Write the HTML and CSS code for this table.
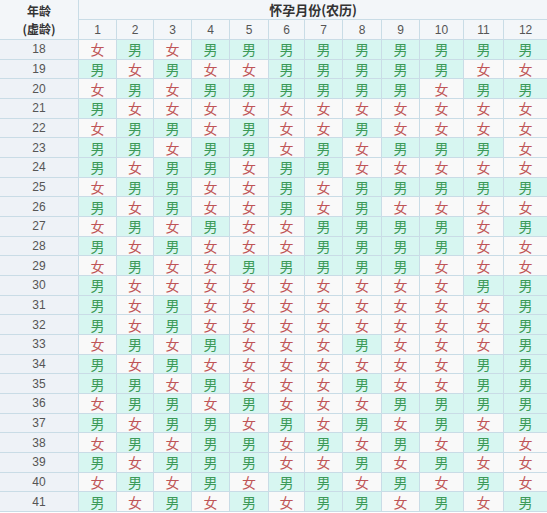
FILE: index.html
```html
<!DOCTYPE html>
<html lang="zh-CN">
<head>
<meta charset="utf-8">
<title>生男生女清宫表</title>
<link rel="stylesheet" href="styles.css">
</head>
<body>
<table class="chart">
<colgroup>
<col class="c-age"><col class="c38"><col class="c37"><col class="c38"><col class="c38"><col class="c39"><col class="c36"><col class="c38"><col class="c39"><col class="c38"><col class="c44"><col class="c40"><col class="c44">
</colgroup>
<thead>
<tr class="h1"><th class="age-h" rowspan="2">年龄<br>(虚龄)</th><th class="title" colspan="12">怀孕月份(农历)</th></tr>
<tr class="h2"><th>1</th><th>2</th><th>3</th><th>4</th><th>5</th><th>6</th><th>7</th><th>8</th><th>9</th><th>10</th><th>11</th><th>12</th></tr>
</thead>
<tbody>
<tr><td class="age">18</td><td class="f">女</td><td class="m">男</td><td class="f">女</td><td class="m">男</td><td class="m">男</td><td class="m">男</td><td class="m">男</td><td class="m">男</td><td class="m">男</td><td class="m">男</td><td class="m">男</td><td class="m">男</td></tr>
<tr><td class="age">19</td><td class="m">男</td><td class="f">女</td><td class="m">男</td><td class="f">女</td><td class="f">女</td><td class="m">男</td><td class="m">男</td><td class="m">男</td><td class="m">男</td><td class="m">男</td><td class="f">女</td><td class="f">女</td></tr>
<tr><td class="age">20</td><td class="f">女</td><td class="m">男</td><td class="f">女</td><td class="m">男</td><td class="m">男</td><td class="m">男</td><td class="m">男</td><td class="m">男</td><td class="m">男</td><td class="f">女</td><td class="m">男</td><td class="m">男</td></tr>
<tr><td class="age">21</td><td class="m">男</td><td class="f">女</td><td class="f">女</td><td class="f">女</td><td class="f">女</td><td class="f">女</td><td class="f">女</td><td class="f">女</td><td class="f">女</td><td class="f">女</td><td class="f">女</td><td class="f">女</td></tr>
<tr><td class="age">22</td><td class="f">女</td><td class="m">男</td><td class="m">男</td><td class="f">女</td><td class="m">男</td><td class="f">女</td><td class="f">女</td><td class="m">男</td><td class="f">女</td><td class="f">女</td><td class="f">女</td><td class="f">女</td></tr>
<tr><td class="age">23</td><td class="m">男</td><td class="m">男</td><td class="f">女</td><td class="m">男</td><td class="m">男</td><td class="f">女</td><td class="m">男</td><td class="f">女</td><td class="m">男</td><td class="m">男</td><td class="m">男</td><td class="f">女</td></tr>
<tr><td class="age">24</td><td class="m">男</td><td class="f">女</td><td class="m">男</td><td class="m">男</td><td class="f">女</td><td class="m">男</td><td class="m">男</td><td class="f">女</td><td class="f">女</td><td class="f">女</td><td class="f">女</td><td class="f">女</td></tr>
<tr><td class="age">25</td><td class="f">女</td><td class="m">男</td><td class="m">男</td><td class="f">女</td><td class="f">女</td><td class="m">男</td><td class="f">女</td><td class="m">男</td><td class="m">男</td><td class="m">男</td><td class="m">男</td><td class="m">男</td></tr>
<tr><td class="age">26</td><td class="m">男</td><td class="f">女</td><td class="m">男</td><td class="f">女</td><td class="f">女</td><td class="m">男</td><td class="f">女</td><td class="m">男</td><td class="f">女</td><td class="f">女</td><td class="f">女</td><td class="f">女</td></tr>
<tr><td class="age">27</td><td class="f">女</td><td class="m">男</td><td class="f">女</td><td class="m">男</td><td class="f">女</td><td class="f">女</td><td class="m">男</td><td class="m">男</td><td class="m">男</td><td class="m">男</td><td class="f">女</td><td class="m">男</td></tr>
<tr><td class="age">28</td><td class="m">男</td><td class="f">女</td><td class="m">男</td><td class="f">女</td><td class="f">女</td><td class="f">女</td><td class="m">男</td><td class="m">男</td><td class="m">男</td><td class="m">男</td><td class="f">女</td><td class="f">女</td></tr>
<tr><td class="age">29</td><td class="f">女</td><td class="m">男</td><td class="f">女</td><td class="f">女</td><td class="m">男</td><td class="m">男</td><td class="m">男</td><td class="m">男</td><td class="m">男</td><td class="f">女</td><td class="f">女</td><td class="f">女</td></tr>
<tr><td class="age">30</td><td class="m">男</td><td class="f">女</td><td class="f">女</td><td class="f">女</td><td class="f">女</td><td class="f">女</td><td class="f">女</td><td class="f">女</td><td class="f">女</td><td class="f">女</td><td class="m">男</td><td class="m">男</td></tr>
<tr><td class="age">31</td><td class="m">男</td><td class="f">女</td><td class="m">男</td><td class="f">女</td><td class="f">女</td><td class="f">女</td><td class="f">女</td><td class="f">女</td><td class="f">女</td><td class="f">女</td><td class="f">女</td><td class="m">男</td></tr>
<tr><td class="age">32</td><td class="m">男</td><td class="f">女</td><td class="m">男</td><td class="f">女</td><td class="f">女</td><td class="f">女</td><td class="f">女</td><td class="f">女</td><td class="f">女</td><td class="f">女</td><td class="f">女</td><td class="m">男</td></tr>
<tr><td class="age">33</td><td class="f">女</td><td class="m">男</td><td class="f">女</td><td class="m">男</td><td class="f">女</td><td class="f">女</td><td class="f">女</td><td class="m">男</td><td class="f">女</td><td class="f">女</td><td class="f">女</td><td class="m">男</td></tr>
<tr><td class="age">34</td><td class="m">男</td><td class="f">女</td><td class="m">男</td><td class="f">女</td><td class="f">女</td><td class="f">女</td><td class="f">女</td><td class="f">女</td><td class="f">女</td><td class="f">女</td><td class="m">男</td><td class="m">男</td></tr>
<tr><td class="age">35</td><td class="m">男</td><td class="m">男</td><td class="f">女</td><td class="m">男</td><td class="f">女</td><td class="f">女</td><td class="f">女</td><td class="m">男</td><td class="f">女</td><td class="f">女</td><td class="m">男</td><td class="m">男</td></tr>
<tr><td class="age">36</td><td class="f">女</td><td class="m">男</td><td class="m">男</td><td class="f">女</td><td class="m">男</td><td class="f">女</td><td class="f">女</td><td class="f">女</td><td class="m">男</td><td class="m">男</td><td class="m">男</td><td class="m">男</td></tr>
<tr><td class="age">37</td><td class="m">男</td><td class="f">女</td><td class="m">男</td><td class="m">男</td><td class="f">女</td><td class="m">男</td><td class="f">女</td><td class="m">男</td><td class="f">女</td><td class="m">男</td><td class="f">女</td><td class="m">男</td></tr>
<tr><td class="age">38</td><td class="f">女</td><td class="m">男</td><td class="f">女</td><td class="m">男</td><td class="m">男</td><td class="f">女</td><td class="m">男</td><td class="f">女</td><td class="m">男</td><td class="f">女</td><td class="m">男</td><td class="f">女</td></tr>
<tr><td class="age">39</td><td class="m">男</td><td class="f">女</td><td class="m">男</td><td class="m">男</td><td class="m">男</td><td class="f">女</td><td class="f">女</td><td class="m">男</td><td class="f">女</td><td class="m">男</td><td class="f">女</td><td class="f">女</td></tr>
<tr><td class="age">40</td><td class="f">女</td><td class="m">男</td><td class="f">女</td><td class="m">男</td><td class="f">女</td><td class="m">男</td><td class="m">男</td><td class="f">女</td><td class="m">男</td><td class="f">女</td><td class="m">男</td><td class="f">女</td></tr>
<tr><td class="age">41</td><td class="m">男</td><td class="f">女</td><td class="m">男</td><td class="f">女</td><td class="m">男</td><td class="f">女</td><td class="m">男</td><td class="m">男</td><td class="f">女</td><td class="m">男</td><td class="f">女</td><td class="m">男</td></tr>
</tbody>
</table>
</body>
</html>
```

FILE: styles.css
```css
html, body {
  margin: 0;
  padding: 0;
  background: #ffffff;
}

body {
  font-family: "Liberation Sans", "Noto Sans CJK SC", sans-serif;
  overflow: hidden;
}

.chart {
  border-collapse: collapse;
  table-layout: fixed;
  width: 548px;
  margin-left: -1px;
  margin-top: -1px;
}

.c-age { width: 79px; }
.c36 { width: 36px; }
.c37 { width: 37px; }
.c38 { width: 38px; }
.c39 { width: 39px; }
.c40 { width: 40px; }
.c44 { width: 44px; }

.chart th,
.chart td {
  border: 1px solid #c9dce6;
  padding: 0;
  text-align: center;
  vertical-align: middle;
  overflow: hidden;
  white-space: nowrap;
}

.h1 { height: 20px; }
.h2 { height: 20px; }

.chart thead th {
  background: #f3f6f9;
}

.age-h {
  font-family: "Noto Sans CJK SC", sans-serif;
  font-weight: bold;
  font-size: 12px;
  line-height: 18px;
  color: #333333;
  background: #eef2f6;
}

.title {
  font-family: "Noto Sans CJK SC", sans-serif;
  font-weight: bold;
  font-size: 13px;
  color: #333333;
  text-align: center;
}

.h2 th {
  font-size: 12px;
  font-weight: normal;
  color: #555555;
}

.chart tbody tr {
  height: 19.68px;
}

.age {
  font-size: 12px;
  color: #555555;
  background: #eef2f7;
}

.m,
.f {
  font-family: "Noto Sans CJK SC", sans-serif;
  font-size: 14px;
  line-height: 16px;
}

.m {
  background: #d7f6f1;
  color: #3c9a58;
}

.f {
  background: #f9f9f9;
  color: #bf5557;
}
```
